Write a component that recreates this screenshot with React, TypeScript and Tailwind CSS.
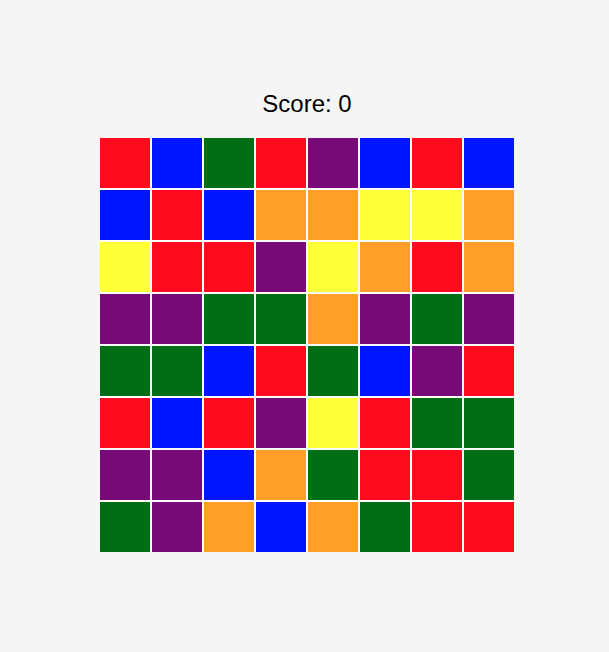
const COLORS: Record<string, string> = {
  R: 'bg-[#ff0a1e]',
  B: 'bg-[#0015ff]',
  G: 'bg-[#006e14]',
  P: 'bg-[#780a78]',
  O: 'bg-[#ff9f2a]',
  Y: 'bg-[#ffff3a]',
};

const BOARD = [
  'RBGRPBRB',
  'BRBOOYYO',
  'YRRPYORO',
  'PPGGOPGP',
  'GGBRGBPR',
  'RBRPYRGG',
  'PPBOGRRG',
  'GPOBOGRR',
];

export default function App() {
  return (
    <div className="min-h-[652px] bg-[#f5f5f5] flex flex-col items-center pt-[90px] pl-[5px] font-['Liberation_Sans',Arial,sans-serif]">
      <h2 className="text-[24px] leading-[28px] text-black">Score: 0</h2>
      <div className="mt-[20px] grid grid-cols-[repeat(8,50px)] gap-[2px] bg-white">
        {BOARD.map((row, r) =>
          row.split('').map((c, i) => (
            <div key={`${r}-${i}`} className={`w-[50px] h-[50px] ${COLORS[c]}`} />
          ))
        )}
      </div>
    </div>
  );
}
